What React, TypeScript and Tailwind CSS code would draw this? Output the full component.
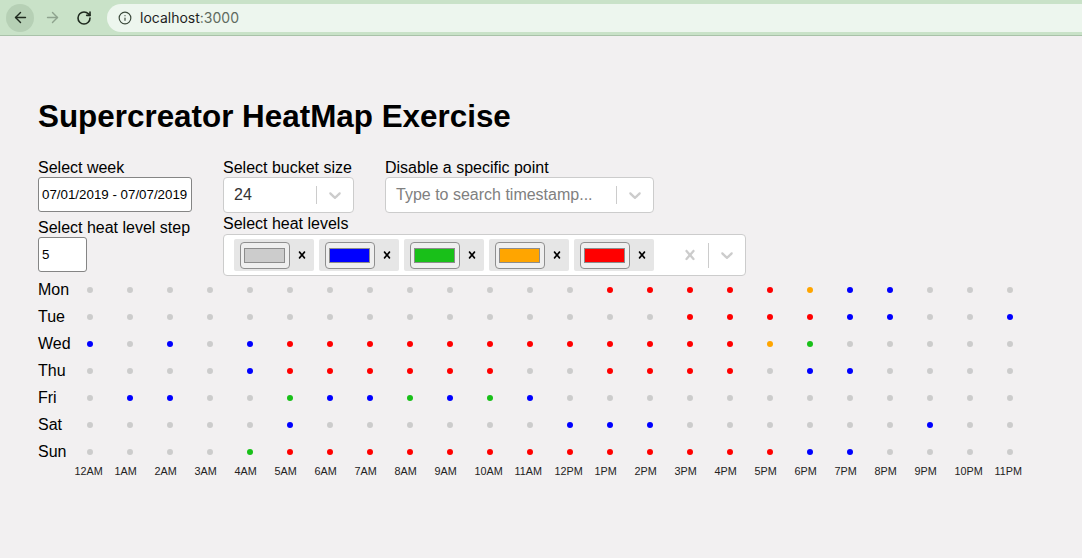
import React from "react";
import { ArrowLeft, ArrowRight, RotateCw, Info } from "lucide-react";

const DAYS = ["Mon", "Tue", "Wed", "Thu", "Fri", "Sat", "Sun"];

const HOURS = [
  "12AM", "1AM", "2AM", "3AM", "4AM", "5AM", "6AM", "7AM", "8AM", "9AM", "10AM", "11AM",
  "12PM", "1PM", "2PM", "3PM", "4PM", "5PM", "6PM", "7PM", "8PM", "9PM", "10PM", "11PM",
];

// g = gray, b = blue, G = green, o = orange, r = red
const GRID = [
  "gggggggggggggrrrrrobbggg",
  "gggggggggggggggrrrrbbggb",
  "bgbgbrrrrrrrrrrrroGggggg",
  "ggggbrrrrrrggrrrrgbbgggg",
  "gbbggGbbGbGbgggggggggggg",
  "gggggbggggggbbbggggggbgg",
  "ggggGrrrrrrrrrrrrrbbgggg",
];

const DOT: Record<string, string> = {
  g: "bg-[#cccccc]",
  b: "bg-[#0000ff]",
  G: "bg-[#19c019]",
  o: "bg-[#ffa500]",
  r: "bg-[#ff0000]",
};

const LEVELS = ["bg-[#cccccc]", "bg-[#0000ff]", "bg-[#19c019]", "bg-[#ffa500]", "bg-[#ff0000]"];

function Chevron() {
  return (
    <svg width="20" height="20" viewBox="0 0 20 20" className="fill-[#cccccc]">
      <path d="M4.516 7.548c0.436-0.446 1.043-0.481 1.576 0l3.908 3.747 3.908-3.747c0.533-0.481 1.141-0.446 1.574 0 0.436 0.445 0.408 1.197 0 1.615-0.406 0.418-4.695 4.502-4.695 4.502-0.217 0.223-0.502 0.335-0.787 0.335s-0.57-0.112-0.789-0.335c0 0-4.287-4.084-4.695-4.502s-0.436-1.17 0-1.615z" />
    </svg>
  );
}

function Cross({ size, className }: { size: number; className: string }) {
  return (
    <svg width={size} height={size} viewBox="0 0 20 20" className={className}>
      <path d="M14.348 14.849c-0.469 0.469-1.229 0.469-1.697 0l-2.651-3.030-2.651 3.029c-0.469 0.469-1.229 0.469-1.697 0-0.469-0.469-0.469-1.229 0-1.697l2.758-3.15-2.759-3.152c-0.469-0.469-0.469-1.228 0-1.697s1.228-0.469 1.697 0l2.652 3.031 2.651-3.031c0.469-0.469 1.228-0.469 1.697 0s0.469 1.229 0 1.697l-2.758 3.152 2.758 3.15c0.469 0.469 0.469 1.229 0 1.698z" />
    </svg>
  );
}

function Indicator() {
  return (
    <div className="flex items-center">
      <div className="w-px self-stretch my-[8px] bg-[#cccccc]" />
      <div className="w-[36px] flex justify-center">
        <Chevron />
      </div>
    </div>
  );
}

function BrowserBar() {
  return (
    <div className="h-[36px] bg-[#c9e2c8] border-b border-[#a9c2a9] flex items-center">
      <div className="ml-[6px] w-[28px] h-[28px] rounded-full bg-[#b6d0b5] flex items-center justify-center">
        <ArrowLeft size={17} strokeWidth={2} className="text-[#1f2a1f]" />
      </div>
      <div className="ml-[8px] w-[20px] flex justify-center">
        <ArrowRight size={17} strokeWidth={2} className="text-[#8ea38e]" />
      </div>
      <div className="ml-[12px] w-[20px] flex justify-center">
        <RotateCw size={16} strokeWidth={2.4} className="text-[#1f2a1f]" />
      </div>
      <div className="ml-[13px] flex-1 h-[28px] rounded-l-full bg-[#edf6ee] flex items-center pl-[11px]">
        <Info size={14} strokeWidth={2} className="text-[#3c4a3c]" />
        <span className="ml-[8px] text-[14px] font-['Inter',sans-serif] text-[#1f1f1f]">
          localhost<span className="text-[#5f6b5f]">:3000</span>
        </span>
      </div>
    </div>
  );
}

export default function App() {
  return (
    <div className="min-h-[558px] bg-[#f2f0f1] font-['Liberation_Sans',Arial,sans-serif] text-black">
      <BrowserBar />
      <div className="pl-[38px] pt-[63px]">
        <h1 className="text-[31.4px] leading-[36px] font-bold">Supercreator HeatMap Exercise</h1>

        {/* Controls */}
        <div className="mt-[24px] flex">
          <div className="w-[185px] flex flex-col">
            <label className="text-[16px] leading-[18px]">Select week</label>
            <div className="w-[154px] h-[35px] bg-white border border-[#858585] rounded-[3px] flex items-center pl-[3px] text-[13.33px]">
              07/01/2019 - 07/07/2019
            </div>
            <label className="mt-[7px] text-[16px] leading-[18px]">Select heat level step</label>
            <div className="w-[49px] h-[35px] bg-white border border-[#858585] rounded-[3px] flex items-center pl-[3px] text-[13.33px]">
              5
            </div>
          </div>

          <div className="flex flex-col">
            <div className="flex">
              <div className="w-[131px] flex flex-col">
                <label className="text-[16px] leading-[18px]">Select bucket size</label>
                <div className="h-[36px] bg-white border border-[#cccccc] rounded-[4px] flex">
                  <div className="flex-1 flex items-center pl-[10px] text-[16px] text-[#333333]">24</div>
                  <Indicator />
                </div>
              </div>
              <div className="ml-[31px] w-[269px] flex flex-col">
                <label className="text-[16px] leading-[18px]">Disable a specific point</label>
                <div className="h-[36px] bg-white border border-[#cccccc] rounded-[4px] flex">
                  <div className="flex-1 flex items-center pl-[10px] text-[16px] text-[#808080]">
                    Type to search timestamp...
                  </div>
                  <Indicator />
                </div>
              </div>
            </div>
            <label className="mt-[2px] text-[16px] leading-[18px]">Select heat levels</label>
            <div className="mt-px w-[523px] h-[42px] bg-white border border-[#cccccc] rounded-[4px] flex items-center">
              <div className="flex-1 flex items-center pl-[10px] gap-[5px]">
                {LEVELS.map((c) => (
                  <div key={c} className="w-[80px] h-[32px] bg-[#e6e6e6] rounded-[2px] flex items-center">
                    <div className="ml-[6px] w-[50px] h-[27px] border border-[#8f8f8f] rounded-[4px] bg-[#efefef] pl-[3px] pt-[5px]">
                      <div className={`w-[41px] h-[15px] border border-[#8c8c8c] ${c}`} />
                    </div>
                    <div className="flex-1 flex justify-center">
                      <Cross size={14} className="fill-black" />
                    </div>
                  </div>
                ))}
              </div>
              <div className="w-[36px] flex justify-center">
                <Cross size={20} className="fill-[#cccccc]" />
              </div>
              <div className="w-px h-[25px] bg-[#cccccc]" />
              <div className="w-[36px] flex justify-center">
                <Chevron />
              </div>
            </div>
          </div>
        </div>

        {/* Heat map */}
        <div className="flex flex-col">
          {GRID.map((row, i) => (
            <div key={DAYS[i]} className="h-[27px] flex items-center">
              <div className="w-[32px] text-[16px] leading-[18px]">{DAYS[i]}</div>
              {row.split("").map((c, j) => (
                <div key={j} className="w-10 flex justify-center">
                  <div className={`w-[6px] h-[6px] rounded-full ${DOT[c]}`} />
                </div>
              ))}
            </div>
          ))}
          <div className="flex pl-[32px] h-[12px] items-center">
            {HOURS.map((h) => (
              <div key={h} className="w-10 pl-[4.5px] text-[10.8px] leading-[12px] text-[#222222]">
                {h}
              </div>
            ))}
          </div>
        </div>
      </div>
    </div>
  );
}
